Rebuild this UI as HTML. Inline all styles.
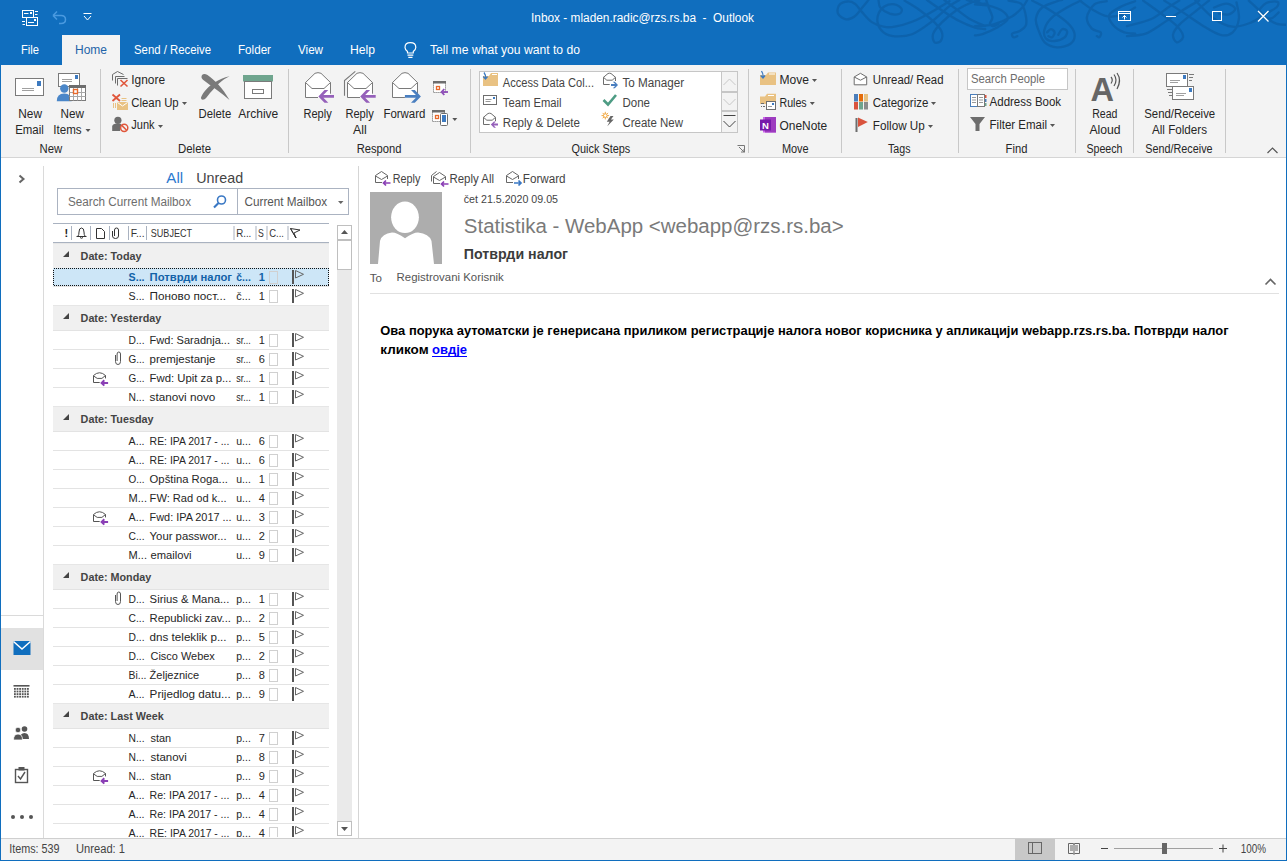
<!DOCTYPE html><html><head><meta charset="utf-8"><style>html,body{margin:0;padding:0;overflow:hidden;background:#fff}svg{display:block}text{font-family:"Liberation Sans",sans-serif}</style></head><body><svg width="1287" height="861" viewBox="0 0 1287 861"><rect x="0" y="0" width="1287" height="65" fill="#106EBE" />
<path d="M868.5 0.0 C867.5 1.2 864.6 4.8 862.3 7.5 C860.0 10.2 857.5 14.2 854.9 16.2 C852.2 18.1 848.9 19.7 846.1 19.3 C843.3 18.9 839.2 16.1 838.1 13.7 C836.9 11.3 837.7 7.0 839.3 5.0 C840.9 2.9 844.8 1.7 847.4 1.5 C850.0 1.3 852.4 1.9 854.9 3.7 C857.3 5.6 859.4 9.3 862.3 12.4 C865.2 15.5 868.7 20.0 872.3 22.4 C875.8 24.8 879.7 26.0 883.5 26.7 C887.2 27.5 889.9 27.6 894.7 26.7 C899.4 25.9 906.1 24.2 912.1 21.8 C918.1 19.4 924.5 15.9 930.7 12.4 C936.9 9.0 946.3 3.1 949.4 1.2 M878.5 0.0 C878.8 1.2 878.5 5.2 880.3 7.5 C882.2 9.7 886.5 12.6 889.7 13.7 C892.9 14.7 897.7 14.5 899.6 13.7 C901.6 12.9 902.3 10.3 901.5 8.7 C900.7 7.2 897.5 4.8 894.7 4.4 C891.9 3.9 887.4 4.7 884.7 6.2 C882.0 7.8 879.6 10.8 878.5 13.7 C877.3 16.6 877.0 20.5 877.9 23.6 C878.7 26.7 880.7 30.2 883.5 32.3 C886.3 34.5 889.9 36.0 894.7 36.3 C899.4 36.6 906.1 36.5 912.1 34.2 C918.1 31.9 924.5 27.1 930.7 22.4 C936.9 17.7 944.6 10.0 949.4 6.2 C954.1 2.5 957.7 1.0 959.3 0.0 M904.6 0.6 C907.1 2.2 914.6 6.3 919.5 10.0 C924.5 13.6 930.7 18.7 934.5 22.4 C938.2 26.1 940.9 29.2 941.9 32.3 C943.0 35.4 941.9 39.4 940.7 41.0 C939.4 42.7 935.7 43.5 934.5 42.3 C933.2 41.0 932.0 36.9 933.2 33.6 C934.5 30.3 938.0 26.3 941.9 22.4 C945.9 18.4 951.5 13.5 956.8 10.0 C962.2 6.4 970.5 2.8 974.3 1.2 C978.0 -0.3 978.4 0.7 979.2 0.6 M927.0 0.0 C929.7 1.9 937.8 7.7 943.2 11.2 C948.5 14.7 954.1 18.4 959.3 21.1 C964.5 23.8 970.0 26.0 974.3 27.4 C978.5 28.7 983.3 28.9 985.1 29.2 M944.4 0.0 C946.3 1.5 951.5 5.6 955.6 8.7 C959.7 11.8 964.4 15.8 969.3 18.7 C974.2 21.6 982.4 24.9 985.1 26.1 M966.8 0.0 C968.0 0.3 971.8 1.2 974.3 1.9 C976.7 2.5 979.9 3.4 981.7 3.7 C983.5 4.0 984.5 3.7 985.1 3.7 M975.0 4.4 C977.3 4.6 983.9 4.4 988.7 5.6 C993.4 6.8 1000.5 9.4 1003.6 11.8 C1006.7 14.2 1008.6 17.2 1007.3 19.9 C1006.1 22.6 1000.3 25.6 996.1 28.0 C992.0 30.4 986.0 33.0 982.5 34.2 C978.9 35.4 976.2 35.2 975.0 35.4 M986.2 0.0 C986.6 1.2 987.6 4.6 988.7 7.5 C989.7 10.4 992.2 14.7 992.4 17.4 C992.6 20.1 989.7 22.2 989.9 23.6 C990.1 25.1 992.2 26.1 993.7 26.1 C995.1 26.1 997.8 24.0 998.6 23.6 M975.0 26.1 C978.1 25.8 987.4 25.9 993.7 24.3 C999.9 22.6 1007.5 19.0 1012.3 16.2 C1017.1 13.4 1019.8 10.2 1022.3 7.5 C1024.8 4.8 1026.4 1.2 1027.2 0.0 M1008.6 0.6 C1010.7 1.1 1018.2 1.6 1021.0 3.7 C1023.8 5.9 1024.5 10.2 1025.4 13.7 C1026.2 17.2 1026.9 22.0 1026.0 24.9 C1025.1 27.8 1022.1 29.6 1019.8 31.1 C1017.5 32.5 1013.3 32.5 1012.3 33.6 C1011.3 34.6 1012.7 36.9 1013.6 37.3 C1014.4 37.7 1016.7 36.3 1017.3 36.1 M1032.2 0.6 C1035.1 2.2 1043.8 6.3 1049.6 10.0 C1055.4 13.6 1062.9 18.4 1067.0 22.4 C1071.2 26.3 1073.9 30.1 1074.5 33.6 C1075.1 37.1 1073.7 41.3 1070.8 43.5 C1067.9 45.8 1061.4 47.5 1057.1 47.3 C1052.7 47.1 1047.8 45.2 1044.7 42.3 C1041.5 39.4 1039.9 33.8 1038.4 29.9 C1037.0 25.9 1035.3 22.4 1035.9 18.7 C1036.6 14.9 1038.6 10.4 1042.2 7.5 C1045.7 4.6 1053.8 2.5 1057.1 1.2 C1060.4 0.0 1061.2 0.2 1062.1 0.0 M1080.7 0.6 C1078.4 1.8 1071.8 4.7 1067.0 7.5 C1062.3 10.3 1055.8 13.9 1052.1 17.4 C1048.4 20.9 1045.7 25.1 1044.7 28.6 C1043.6 32.1 1044.2 36.5 1045.9 38.6 C1047.6 40.6 1051.5 41.3 1054.6 41.0 C1057.7 40.8 1062.5 39.0 1064.6 37.3 C1066.6 35.7 1067.5 32.4 1067.0 31.1 C1066.6 29.7 1063.5 28.6 1062.1 29.2 C1060.6 29.9 1059.0 33.9 1058.3 34.8 M1047.1 32.3 C1047.8 31.8 1049.6 29.2 1050.9 29.2 C1052.1 29.2 1054.4 31.0 1054.6 32.3 C1054.8 33.7 1053.2 36.7 1052.1 37.3 C1051.1 37.9 1049.0 36.3 1048.4 36.1 M1106.8 1.2 C1104.8 1.8 1097.7 1.7 1094.4 4.4 C1091.1 7.0 1087.4 13.4 1086.9 17.4 C1086.5 21.5 1089.6 26.1 1091.9 28.6 C1094.2 31.1 1099.4 30.9 1100.6 32.3 C1101.9 33.8 1100.0 36.7 1099.4 37.3 C1098.8 37.9 1097.3 36.3 1096.9 36.1 M1080.7 1.2 C1082.8 2.7 1088.8 7.5 1093.2 10.0 C1097.5 12.4 1102.1 15.3 1106.8 16.2 C1111.6 17.0 1117.1 16.4 1121.8 14.9 C1126.5 13.5 1132.9 8.7 1135.1 7.5 M1135.1 1.2 C1132.9 2.1 1126.1 3.9 1121.8 6.2 C1117.5 8.5 1110.8 11.8 1109.3 14.9 C1107.9 18.0 1110.6 22.0 1113.1 24.9 C1115.5 27.8 1120.6 30.9 1124.3 32.3 C1127.9 33.8 1133.3 33.4 1135.1 33.6 M1127.0 26.1 C1131.1 24.9 1145.0 21.8 1151.9 18.7 C1158.7 15.5 1163.5 10.5 1168.0 7.5 C1172.6 4.5 1177.4 1.8 1179.2 0.6 M1127.0 36.1 C1130.1 35.7 1139.4 35.9 1145.7 33.6 C1151.9 31.3 1158.1 26.3 1164.3 22.4 C1170.5 18.4 1177.2 13.6 1183.0 10.0 C1188.8 6.3 1196.4 2.2 1199.1 0.6 M1143.2 0.6 C1147.3 3.6 1162.0 14.0 1168.0 18.7 C1174.1 23.3 1176.8 25.5 1179.2 28.6 C1181.7 31.7 1183.4 35.0 1183.0 37.3 C1182.6 39.6 1178.4 42.7 1176.8 42.3 C1175.1 41.9 1172.6 37.7 1173.0 34.8 C1173.4 31.9 1175.7 28.6 1179.2 24.9 C1182.8 21.1 1189.2 16.5 1194.2 12.4 C1199.1 8.4 1206.6 2.6 1209.1 0.6 M1164.3 0.6 C1167.4 2.6 1176.8 8.4 1183.0 12.4 C1189.2 16.5 1195.4 21.1 1201.6 24.9 C1207.8 28.6 1215.1 33.6 1220.3 34.8 C1225.5 36.1 1229.6 35.0 1232.7 32.3 C1235.8 29.6 1238.3 23.6 1238.9 18.7 C1239.6 13.7 1236.9 5.2 1236.5 2.5 M1214.1 7.5 C1216.1 6.8 1223.0 3.5 1226.5 3.7 C1230.0 3.9 1234.8 6.9 1235.2 8.7 C1235.6 10.5 1231.7 13.5 1229.0 14.3 C1226.3 15.1 1220.7 13.8 1219.0 13.7 M1195.4 0.6 C1198.5 3.6 1207.8 14.3 1214.1 18.7 C1220.3 23.0 1226.5 26.1 1232.7 26.7 C1238.9 27.4 1246.2 24.4 1251.4 22.4 C1256.6 20.4 1259.7 17.4 1263.8 14.9 C1268.0 12.4 1274.0 9.6 1276.3 7.5 C1278.5 5.3 1279.2 2.6 1277.5 1.9 C1275.8 1.1 1269.4 1.3 1266.3 3.1 C1263.2 4.9 1258.2 9.8 1258.8 12.4 C1259.5 15.0 1266.7 18.7 1270.0 18.7 C1273.4 18.7 1277.3 13.5 1278.7 12.4 M1248.9 0.6 C1250.5 2.2 1255.7 6.9 1258.8 10.0 C1262.0 13.0 1264.6 16.4 1267.5 18.7 C1270.4 20.9 1273.0 22.6 1276.3 23.6 C1279.5 24.7 1285.3 24.7 1287.1 24.9" fill="none" stroke="#0C5FA6" stroke-opacity="0.75" stroke-width="2.3" stroke-linecap="round"/>
<g stroke="#fff" fill="none" stroke-width="1"><rect x="22.5" y="10.5" width="11" height="7"/><rect x="26.5" y="17.5" width="11" height="8"/><path d="M24 13.5 H28.5 M28 22.5 H34 M35 11.5 H38 M35 14.5 H37.5 M22 21.5 H25 M22.5 24.5 H25"/></g>
<rect x="30" y="12" width="2" height="2" fill="#fff"/><rect x="34" y="19" width="2" height="2" fill="#fff"/>
<path d="M53 15.5 L57 11.5 M53 15.5 L57 19.5 M53 15.5 H61 Q65.5 15.5 65.5 19.5 Q65.5 23.5 61 23.5 H59" stroke="#4A9AE0" stroke-width="1.5" fill="none"/>
<path d="M83.5 13.5 H91.5 M84 16 L87.5 20 L91 16" stroke="#fff" stroke-width="1" fill="none"/>
<text x="531" y="22" font-size="12" fill="#fff" textLength="223.0" lengthAdjust="spacingAndGlyphs" >Inbox - mladen.radic@rzs.rs.ba  -  Outlook</text>
<g stroke="#fff" fill="none" stroke-width="1"><rect x="1118.5" y="11.5" width="12" height="9"/><line x1="1118.5" y1="13.5" x2="1130.5" y2="13.5"/><path d="M1124.5 19.5 V15.5 M1122.5 17.5 L1124.5 15.5 L1126.5 17.5"/><line x1="1166" y1="16.5" x2="1176" y2="16.5"/><rect x="1212.5" y="11.5" width="9" height="9"/><path d="M1258 11 L1268.5 21.5 M1268.5 11 L1258 21.5" stroke-width="1.3"/></g>
<rect x="62" y="35" width="58" height="30" fill="#F3F3F3" />
<text x="21" y="54" font-size="12" fill="#fff" textLength="18.0" lengthAdjust="spacingAndGlyphs" >File</text>
<text x="75" y="54" font-size="12" fill="#1E63A8" textLength="32.0" lengthAdjust="spacingAndGlyphs" >Home</text>
<text x="134" y="54" font-size="12" fill="#fff" textLength="77.0" lengthAdjust="spacingAndGlyphs" >Send / Receive</text>
<text x="238" y="54" font-size="12" fill="#fff" textLength="33.0" lengthAdjust="spacingAndGlyphs" >Folder</text>
<text x="298" y="54" font-size="12" fill="#fff" textLength="25.0" lengthAdjust="spacingAndGlyphs" >View</text>
<text x="350" y="54" font-size="12" fill="#fff" textLength="25.0" lengthAdjust="spacingAndGlyphs" >Help</text>
<path d="M407.5 53 V51.5 Q405 49.5 405 47.5 Q405 42.7 410.4 42.7 Q415.8 42.7 415.8 47.5 Q415.8 49.5 413.3 51.5 V53 Z M407.5 55.2 H413.3 M408.3 57.3 H412.5" stroke="#fff" stroke-width="1.2" fill="none"/>
<text x="430" y="54" font-size="12" fill="#fff" textLength="150.0" lengthAdjust="spacingAndGlyphs" >Tell me what you want to do</text>
<rect x="1" y="65" width="1285" height="92" fill="#F3F3F3" />
<rect x="0" y="157" width="1287" height="1" fill="#D5D5D5" />
<rect x="100" y="69" width="1" height="84" fill="#C8C8C8" />
<rect x="288" y="69" width="1" height="84" fill="#C8C8C8" />
<rect x="470" y="69" width="1" height="84" fill="#C8C8C8" />
<rect x="748" y="69" width="1" height="84" fill="#C8C8C8" />
<rect x="841" y="69" width="1" height="84" fill="#C8C8C8" />
<rect x="958" y="69" width="1" height="84" fill="#C8C8C8" />
<rect x="1075" y="69" width="1" height="84" fill="#C8C8C8" />
<rect x="1133" y="69" width="1" height="84" fill="#C8C8C8" />
<rect x="1225" y="69" width="1" height="84" fill="#C8C8C8" />
<text x="39.5" y="152.7" font-size="12" fill="#262626" textLength="22.7" lengthAdjust="spacingAndGlyphs" >New</text>
<text x="178" y="152.7" font-size="12" fill="#262626" textLength="33.0" lengthAdjust="spacingAndGlyphs" >Delete</text>
<text x="356.7" y="152.7" font-size="12" fill="#262626" textLength="44.8" lengthAdjust="spacingAndGlyphs" >Respond</text>
<text x="571.6" y="152.7" font-size="12" fill="#262626" textLength="58.7" lengthAdjust="spacingAndGlyphs" >Quick Steps</text>
<text x="781.9" y="152.7" font-size="12" fill="#262626" textLength="26.8" lengthAdjust="spacingAndGlyphs" >Move</text>
<text x="888" y="152.7" font-size="12" fill="#262626" textLength="22.5" lengthAdjust="spacingAndGlyphs" >Tags</text>
<text x="1005.6" y="152.7" font-size="12" fill="#262626" textLength="21.8" lengthAdjust="spacingAndGlyphs" >Find</text>
<text x="1086.4" y="152.7" font-size="12" fill="#262626" textLength="36.1" lengthAdjust="spacingAndGlyphs" >Speech</text>
<text x="1145.3" y="152.7" font-size="12" fill="#262626" textLength="67.3" lengthAdjust="spacingAndGlyphs" >Send/Receive</text>
<text x="18.3" y="117.6" font-size="12" fill="#262626" textLength="23.7" lengthAdjust="spacingAndGlyphs" >New</text>
<text x="15.2" y="134" font-size="12" fill="#262626" textLength="28.6" lengthAdjust="spacingAndGlyphs" >Email</text>
<text x="60.6" y="117.6" font-size="12" fill="#262626" textLength="23.4" lengthAdjust="spacingAndGlyphs" >New</text>
<text x="53.3" y="134" font-size="12" fill="#262626" textLength="28.3" lengthAdjust="spacingAndGlyphs" >Items</text>
<text x="198.5" y="117.6" font-size="12" fill="#262626" textLength="32.7" lengthAdjust="spacingAndGlyphs" >Delete</text>
<text x="238.2" y="117.6" font-size="12" fill="#262626" textLength="40.1" lengthAdjust="spacingAndGlyphs" >Archive</text>
<text x="303.4" y="117.6" font-size="12" fill="#262626" textLength="28.3" lengthAdjust="spacingAndGlyphs" >Reply</text>
<text x="345.4" y="117.6" font-size="12" fill="#262626" textLength="28.4" lengthAdjust="spacingAndGlyphs" >Reply</text>
<text x="353" y="133.6" font-size="12" fill="#262626" textLength="13.7" lengthAdjust="spacingAndGlyphs" >All</text>
<text x="383.4" y="117.6" font-size="12" fill="#262626" textLength="42.0" lengthAdjust="spacingAndGlyphs" >Forward</text>
<text x="1092.2" y="117.6" font-size="12" fill="#262626" textLength="25.3" lengthAdjust="spacingAndGlyphs" >Read</text>
<text x="1089.4" y="133.6" font-size="12" fill="#262626" textLength="31.2" lengthAdjust="spacingAndGlyphs" >Aloud</text>
<text x="1144.2" y="117.6" font-size="12" fill="#262626" textLength="71.0" lengthAdjust="spacingAndGlyphs" >Send/Receive</text>
<text x="1152" y="133.6" font-size="12" fill="#262626" textLength="55.0" lengthAdjust="spacingAndGlyphs" >All Folders</text>
<text x="131.3" y="84" font-size="12" fill="#262626" textLength="33.7" lengthAdjust="spacingAndGlyphs" >Ignore</text>
<text x="131.3" y="106.7" font-size="12" fill="#262626" textLength="47.4" lengthAdjust="spacingAndGlyphs" >Clean Up</text>
<text x="131.3" y="129.3" font-size="12" fill="#262626" textLength="23.3" lengthAdjust="spacingAndGlyphs" >Junk</text>
<text x="779.5" y="84" font-size="12" fill="#262626" textLength="29.5" lengthAdjust="spacingAndGlyphs" >Move</text>
<text x="779.5" y="106.7" font-size="12" fill="#262626" textLength="27.2" lengthAdjust="spacingAndGlyphs" >Rules</text>
<text x="779.5" y="129.5" font-size="12" fill="#262626" textLength="47.7" lengthAdjust="spacingAndGlyphs" >OneNote</text>
<text x="872.8" y="84" font-size="12" fill="#262626" textLength="70.7" lengthAdjust="spacingAndGlyphs" >Unread/ Read</text>
<text x="872.8" y="106.7" font-size="12" fill="#262626" textLength="55.6" lengthAdjust="spacingAndGlyphs" >Categorize</text>
<text x="872.8" y="129.5" font-size="12" fill="#262626" textLength="52.0" lengthAdjust="spacingAndGlyphs" >Follow Up</text>
<text x="989.6" y="106" font-size="12" fill="#262626" textLength="71.5" lengthAdjust="spacingAndGlyphs" >Address Book</text>
<text x="989.6" y="128.5" font-size="12" fill="#262626" textLength="57.5" lengthAdjust="spacingAndGlyphs" >Filter Email</text>
<path d="M85.5 129 h5 l-2.5 3 z" fill="#555"/>
<path d="M182 102 h5 l-2.5 3 z" fill="#555"/>
<path d="M158 125 h5 l-2.5 3 z" fill="#555"/>
<path d="M452.3 118 h5 l-2.5 3 z" fill="#555"/>
<path d="M812 79 h5 l-2.5 3 z" fill="#555"/>
<path d="M809.8 102 h5 l-2.5 3 z" fill="#555"/>
<path d="M931 102 h5 l-2.5 3 z" fill="#555"/>
<path d="M928 125 h5 l-2.5 3 z" fill="#555"/>
<path d="M1050 124 h5 l-2.5 3 z" fill="#555"/>
<rect x="967.5" y="68.5" width="100" height="21" fill="#fff" stroke="#C6C6C6" stroke-width="1"/>
<text x="971" y="83" font-size="12" fill="#6D6D6D" textLength="74.1" lengthAdjust="spacingAndGlyphs" >Search People</text>
<rect x="479.5" y="71.5" width="258" height="61" fill="#fff" stroke="#C6C6C6" stroke-width="1"/>
<text x="502.8" y="87" font-size="12" fill="#444" textLength="91.2" lengthAdjust="spacingAndGlyphs" >Access Data Col...</text>
<text x="502.8" y="107" font-size="12" fill="#444" textLength="58.7" lengthAdjust="spacingAndGlyphs" >Team Email</text>
<text x="502.8" y="127" font-size="12" fill="#444" textLength="77.2" lengthAdjust="spacingAndGlyphs" >Reply &amp; Delete</text>
<text x="622.5" y="87" font-size="12" fill="#444" textLength="61.7" lengthAdjust="spacingAndGlyphs" >To Manager</text>
<text x="622.5" y="107" font-size="12" fill="#444" textLength="27.5" lengthAdjust="spacingAndGlyphs" >Done</text>
<text x="622.5" y="127" font-size="12" fill="#444" textLength="60.5" lengthAdjust="spacingAndGlyphs" >Create New</text>
<rect x="721" y="71.5" width="16.5" height="61" fill="#F3F3F3" />
<g stroke="#C6C6C6" fill="none" stroke-width="1"><rect x="721.5" y="71.5" width="16" height="20"/><rect x="721.5" y="92.5" width="16" height="18"/><rect x="721.5" y="111.5" width="16" height="21"/></g>
<path d="M723.5 85 L729.5 79 L735.5 85 M723.5 99 L729.5 105 L735.5 99" stroke="#C8C8C8" fill="none" stroke-width="1"/>
<path d="M723.5 115.5 H735.5 M723.5 121 L729.5 127 L735.5 121" stroke="#444" fill="none" stroke-width="1"/>
<path d="M737.5 145.5 H744.5 V152.5 M739 147 L744 152 M744 149 V152 H741" stroke="#777" fill="none" stroke-width="1"/>
<path d="M1267.5 153 L1272.5 148 L1277.5 153" stroke="#555" fill="none" stroke-width="1.2"/>
<rect x="43" y="166" width="1" height="672" fill="#DADADA" />
<path d="M19.5 175.5 L23.5 179 L19.5 182.5" stroke="#666" stroke-width="2" fill="none"/>
<rect x="1" y="615" width="42" height="1" fill="#DADADA" />
<rect x="1" y="628" width="42" height="42" fill="#E1E1E1" />
<text x="166.3" y="183" font-size="15" fill="#2B79CF" textLength="16.8" lengthAdjust="spacingAndGlyphs" >All</text>
<text x="196.3" y="183" font-size="15" fill="#444" textLength="46.9" lengthAdjust="spacingAndGlyphs" >Unread</text>
<rect x="57.5" y="188.5" width="291" height="26" fill="#fff" stroke="#ABB3C1" stroke-width="1"/>
<rect x="237" y="189" width="1" height="25" fill="#ABB3C1" />
<text x="68" y="206" font-size="12" fill="#6D6D6D" textLength="123.0" lengthAdjust="spacingAndGlyphs" >Search Current Mailbox</text>
<g stroke="#3A78C4" fill="none"><circle cx="221.5" cy="200" r="4" stroke-width="1.6"/><path d="M218.5 203 L214 207.5" stroke-width="2.2"/></g>
<text x="244.5" y="205.8" font-size="12" fill="#555" textLength="82.7" lengthAdjust="spacingAndGlyphs" >Current Mailbox</text>
<path d="M338 201 h5.5 l-2.75 3 z" fill="#666"/>
<rect x="53" y="223" width="276" height="1" fill="#A9B2C0" />
<rect x="53" y="242" width="276" height="1" fill="#A9B2C0" />
<rect x="71" y="226" width="1" height="14" fill="#A9B2C0" />
<rect x="90" y="226" width="1" height="14" fill="#A9B2C0" />
<rect x="109" y="226" width="1" height="14" fill="#A9B2C0" />
<rect x="128" y="226" width="1" height="14" fill="#A9B2C0" />
<rect x="146" y="226" width="1" height="14" fill="#A9B2C0" />
<rect x="233.5" y="226" width="1" height="14" fill="#A9B2C0" />
<rect x="255.5" y="226" width="1" height="14" fill="#A9B2C0" />
<rect x="266.5" y="226" width="1" height="14" fill="#A9B2C0" />
<rect x="287.5" y="226" width="1" height="14" fill="#A9B2C0" />
<text x="64.5" y="237" font-size="11" fill="#222" font-weight="bold" >!</text>
<path d="M76.5 236.5 h10 M78 236 q1-1 1-4 q0-4 2.5-4 q2.5 0 2.5 4 q0 3 1 4 M80 237.5 q1.5 1.5 3 0" stroke="#333" fill="none" stroke-width="1"/>
<path d="M96.5 228.5 h5 l3 3 v7 h-8 z" stroke="#333" fill="none" stroke-width="1"/>
<path d="M112.5 231 v5 q0 2.5 3 2.5 q3 0 3-2.5 v-6 q0-2-2-2 q-2 0-2 2 v6" stroke="#333" fill="none" stroke-width="1"/>
<text x="130.8" y="237" font-size="11" fill="#333" textLength="13.8" lengthAdjust="spacingAndGlyphs" >F...</text>
<text x="150.8" y="237" font-size="11" fill="#333" textLength="41.2" lengthAdjust="spacingAndGlyphs" >SUBJECT</text>
<text x="236.2" y="237" font-size="11" fill="#333" textLength="15.1" lengthAdjust="spacingAndGlyphs" >R...</text>
<text x="258" y="237" font-size="11" fill="#333" textLength="5.8" lengthAdjust="spacingAndGlyphs" >S</text>
<text x="269.3" y="237" font-size="11" fill="#333" textLength="14.7" lengthAdjust="spacingAndGlyphs" >C...</text>
<path d="M290.5 228.5 L300 230 L294 233 L296 238 Z M290.5 228.5 L296 238" stroke="#333" fill="none" stroke-width="1"/>
<rect x="337" y="225" width="15" height="611" fill="#EAEAEA" />
<rect x="337.5" y="225.5" width="14" height="14" fill="#fff" stroke="#BFBFBF"/>
<path d="M341 234 h7 l-3.5-4 z" fill="#555"/>
<rect x="337.5" y="240.5" width="14" height="29" fill="#fff" stroke="#BFBFBF"/>
<rect x="337.5" y="821.5" width="14" height="14" fill="#fff" stroke="#BFBFBF"/>
<path d="M341 827 h7 l-3.5 4 z" fill="#555"/>
<rect x="358" y="166" width="1" height="672" fill="#D5D5D5" />
<rect x="53" y="243" width="276" height="25" fill="#F0F0F0" />
<rect x="53" y="243" width="276" height="1" fill="#E6E6E6" />
<path d="M63 257 L69 251 V257 Z" fill="#444"/>
<text x="80.6" y="260" font-size="11" fill="#444" font-weight="bold" textLength="60.9" lengthAdjust="spacingAndGlyphs" >Date: Today</text>
<rect x="53" y="268" width="276" height="18" fill="#CDE6F7" />
<path d="M54 268h1v1h-1zM54 285h1v1h-1zM56 268h1v1h-1zM56 285h1v1h-1zM58 268h1v1h-1zM58 285h1v1h-1zM60 268h1v1h-1zM60 285h1v1h-1zM62 268h1v1h-1zM62 285h1v1h-1zM64 268h1v1h-1zM64 285h1v1h-1zM66 268h1v1h-1zM66 285h1v1h-1zM68 268h1v1h-1zM68 285h1v1h-1zM70 268h1v1h-1zM70 285h1v1h-1zM72 268h1v1h-1zM72 285h1v1h-1zM74 268h1v1h-1zM74 285h1v1h-1zM76 268h1v1h-1zM76 285h1v1h-1zM78 268h1v1h-1zM78 285h1v1h-1zM80 268h1v1h-1zM80 285h1v1h-1zM82 268h1v1h-1zM82 285h1v1h-1zM84 268h1v1h-1zM84 285h1v1h-1zM86 268h1v1h-1zM86 285h1v1h-1zM88 268h1v1h-1zM88 285h1v1h-1zM90 268h1v1h-1zM90 285h1v1h-1zM92 268h1v1h-1zM92 285h1v1h-1zM94 268h1v1h-1zM94 285h1v1h-1zM96 268h1v1h-1zM96 285h1v1h-1zM98 268h1v1h-1zM98 285h1v1h-1zM100 268h1v1h-1zM100 285h1v1h-1zM102 268h1v1h-1zM102 285h1v1h-1zM104 268h1v1h-1zM104 285h1v1h-1zM106 268h1v1h-1zM106 285h1v1h-1zM108 268h1v1h-1zM108 285h1v1h-1zM110 268h1v1h-1zM110 285h1v1h-1zM112 268h1v1h-1zM112 285h1v1h-1zM114 268h1v1h-1zM114 285h1v1h-1zM116 268h1v1h-1zM116 285h1v1h-1zM118 268h1v1h-1zM118 285h1v1h-1zM120 268h1v1h-1zM120 285h1v1h-1zM122 268h1v1h-1zM122 285h1v1h-1zM124 268h1v1h-1zM124 285h1v1h-1zM126 268h1v1h-1zM126 285h1v1h-1zM128 268h1v1h-1zM128 285h1v1h-1zM130 268h1v1h-1zM130 285h1v1h-1zM132 268h1v1h-1zM132 285h1v1h-1zM134 268h1v1h-1zM134 285h1v1h-1zM136 268h1v1h-1zM136 285h1v1h-1zM138 268h1v1h-1zM138 285h1v1h-1zM140 268h1v1h-1zM140 285h1v1h-1zM142 268h1v1h-1zM142 285h1v1h-1zM144 268h1v1h-1zM144 285h1v1h-1zM146 268h1v1h-1zM146 285h1v1h-1zM148 268h1v1h-1zM148 285h1v1h-1zM150 268h1v1h-1zM150 285h1v1h-1zM152 268h1v1h-1zM152 285h1v1h-1zM154 268h1v1h-1zM154 285h1v1h-1zM156 268h1v1h-1zM156 285h1v1h-1zM158 268h1v1h-1zM158 285h1v1h-1zM160 268h1v1h-1zM160 285h1v1h-1zM162 268h1v1h-1zM162 285h1v1h-1zM164 268h1v1h-1zM164 285h1v1h-1zM166 268h1v1h-1zM166 285h1v1h-1zM168 268h1v1h-1zM168 285h1v1h-1zM170 268h1v1h-1zM170 285h1v1h-1zM172 268h1v1h-1zM172 285h1v1h-1zM174 268h1v1h-1zM174 285h1v1h-1zM176 268h1v1h-1zM176 285h1v1h-1zM178 268h1v1h-1zM178 285h1v1h-1zM180 268h1v1h-1zM180 285h1v1h-1zM182 268h1v1h-1zM182 285h1v1h-1zM184 268h1v1h-1zM184 285h1v1h-1zM186 268h1v1h-1zM186 285h1v1h-1zM188 268h1v1h-1zM188 285h1v1h-1zM190 268h1v1h-1zM190 285h1v1h-1zM192 268h1v1h-1zM192 285h1v1h-1zM194 268h1v1h-1zM194 285h1v1h-1zM196 268h1v1h-1zM196 285h1v1h-1zM198 268h1v1h-1zM198 285h1v1h-1zM200 268h1v1h-1zM200 285h1v1h-1zM202 268h1v1h-1zM202 285h1v1h-1zM204 268h1v1h-1zM204 285h1v1h-1zM206 268h1v1h-1zM206 285h1v1h-1zM208 268h1v1h-1zM208 285h1v1h-1zM210 268h1v1h-1zM210 285h1v1h-1zM212 268h1v1h-1zM212 285h1v1h-1zM214 268h1v1h-1zM214 285h1v1h-1zM216 268h1v1h-1zM216 285h1v1h-1zM218 268h1v1h-1zM218 285h1v1h-1zM220 268h1v1h-1zM220 285h1v1h-1zM222 268h1v1h-1zM222 285h1v1h-1zM224 268h1v1h-1zM224 285h1v1h-1zM226 268h1v1h-1zM226 285h1v1h-1zM228 268h1v1h-1zM228 285h1v1h-1zM230 268h1v1h-1zM230 285h1v1h-1zM232 268h1v1h-1zM232 285h1v1h-1zM234 268h1v1h-1zM234 285h1v1h-1zM236 268h1v1h-1zM236 285h1v1h-1zM238 268h1v1h-1zM238 285h1v1h-1zM240 268h1v1h-1zM240 285h1v1h-1zM242 268h1v1h-1zM242 285h1v1h-1zM244 268h1v1h-1zM244 285h1v1h-1zM246 268h1v1h-1zM246 285h1v1h-1zM248 268h1v1h-1zM248 285h1v1h-1zM250 268h1v1h-1zM250 285h1v1h-1zM252 268h1v1h-1zM252 285h1v1h-1zM254 268h1v1h-1zM254 285h1v1h-1zM256 268h1v1h-1zM256 285h1v1h-1zM258 268h1v1h-1zM258 285h1v1h-1zM260 268h1v1h-1zM260 285h1v1h-1zM262 268h1v1h-1zM262 285h1v1h-1zM264 268h1v1h-1zM264 285h1v1h-1zM266 268h1v1h-1zM266 285h1v1h-1zM268 268h1v1h-1zM268 285h1v1h-1zM270 268h1v1h-1zM270 285h1v1h-1zM272 268h1v1h-1zM272 285h1v1h-1zM274 268h1v1h-1zM274 285h1v1h-1zM276 268h1v1h-1zM276 285h1v1h-1zM278 268h1v1h-1zM278 285h1v1h-1zM280 268h1v1h-1zM280 285h1v1h-1zM282 268h1v1h-1zM282 285h1v1h-1zM284 268h1v1h-1zM284 285h1v1h-1zM286 268h1v1h-1zM286 285h1v1h-1zM288 268h1v1h-1zM288 285h1v1h-1zM290 268h1v1h-1zM290 285h1v1h-1zM292 268h1v1h-1zM292 285h1v1h-1zM294 268h1v1h-1zM294 285h1v1h-1zM296 268h1v1h-1zM296 285h1v1h-1zM298 268h1v1h-1zM298 285h1v1h-1zM300 268h1v1h-1zM300 285h1v1h-1zM302 268h1v1h-1zM302 285h1v1h-1zM304 268h1v1h-1zM304 285h1v1h-1zM306 268h1v1h-1zM306 285h1v1h-1zM308 268h1v1h-1zM308 285h1v1h-1zM310 268h1v1h-1zM310 285h1v1h-1zM312 268h1v1h-1zM312 285h1v1h-1zM314 268h1v1h-1zM314 285h1v1h-1zM316 268h1v1h-1zM316 285h1v1h-1zM318 268h1v1h-1zM318 285h1v1h-1zM320 268h1v1h-1zM320 285h1v1h-1zM322 268h1v1h-1zM322 285h1v1h-1zM324 268h1v1h-1zM324 285h1v1h-1zM326 268h1v1h-1zM326 285h1v1h-1zM328 268h1v1h-1zM328 285h1v1h-1zM53 270h1v1h-1zM328 270h1v1h-1zM53 272h1v1h-1zM328 272h1v1h-1zM53 274h1v1h-1zM328 274h1v1h-1zM53 276h1v1h-1zM328 276h1v1h-1zM53 278h1v1h-1zM328 278h1v1h-1zM53 280h1v1h-1zM328 280h1v1h-1zM53 282h1v1h-1zM328 282h1v1h-1zM53 284h1v1h-1zM328 284h1v1h-1z" fill="#111"/>
<text x="128.6" y="281" font-size="11" fill="#1262A8" font-weight="bold" textLength="16.0" lengthAdjust="spacingAndGlyphs" >S...</text>
<text x="149.6" y="281" font-size="11" fill="#1262A8" font-weight="bold" textLength="82.4" lengthAdjust="spacingAndGlyphs" >Потврди налог</text>
<text x="236.3" y="281" font-size="11" fill="#1262A8" font-weight="bold" textLength="14.5" lengthAdjust="spacingAndGlyphs" >č...</text>
<text x="258.8" y="281" font-size="11" fill="#1262A8" font-weight="bold" >1</text>
<rect x="269.5" y="271.5" width="8" height="12" fill="none" stroke="#D0D0D0" stroke-width="1"/>
<rect x="292" y="270" width="2" height="14" fill="#555"/><path d="M295.5 270.5 L303.5 274.3 L295.5 278 Z" fill="none" stroke="#666" stroke-width="1"/>
<rect x="53" y="286" width="276" height="1" fill="#E3E3E3" />
<text x="128.6" y="300" font-size="11" fill="#262626" textLength="16.0" lengthAdjust="spacingAndGlyphs" >S...</text>
<text x="149.6" y="300" font-size="11" fill="#262626" textLength="76.4" lengthAdjust="spacingAndGlyphs" >Поново пост...</text>
<text x="236.3" y="300" font-size="11" fill="#262626" textLength="14.5" lengthAdjust="spacingAndGlyphs" >č...</text>
<text x="258.8" y="300" font-size="11" fill="#262626" >1</text>
<rect x="269.5" y="290.5" width="8" height="12" fill="#fff" stroke="#D0D0D0" stroke-width="1"/>
<rect x="292" y="289" width="2" height="14" fill="#555"/><path d="M295.5 289.5 L303.5 293.3 L295.5 297 Z" fill="none" stroke="#666" stroke-width="1"/>
<rect x="53" y="305" width="276" height="25" fill="#F0F0F0" />
<rect x="53" y="305" width="276" height="1" fill="#E6E6E6" />
<path d="M63 319 L69 313 V319 Z" fill="#444"/>
<text x="80.6" y="322" font-size="11" fill="#444" font-weight="bold" textLength="80.7" lengthAdjust="spacingAndGlyphs" >Date: Yesterday</text>
<rect x="53" y="330" width="276" height="1" fill="#E3E3E3" />
<text x="128.6" y="344" font-size="11" fill="#262626" textLength="16.0" lengthAdjust="spacingAndGlyphs" >D...</text>
<text x="149.6" y="344" font-size="11" fill="#262626" textLength="80.4" lengthAdjust="spacingAndGlyphs" >Fwd: Saradnja...</text>
<text x="236.3" y="344" font-size="11" fill="#262626" textLength="14.5" lengthAdjust="spacingAndGlyphs" >sr...</text>
<text x="258.8" y="344" font-size="11" fill="#262626" >1</text>
<rect x="269.5" y="334.5" width="8" height="12" fill="#fff" stroke="#D0D0D0" stroke-width="1"/>
<rect x="292" y="333" width="2" height="14" fill="#555"/><path d="M295.5 333.5 L303.5 337.3 L295.5 341 Z" fill="none" stroke="#666" stroke-width="1"/>
<rect x="53" y="349" width="276" height="1" fill="#E3E3E3" />
<text x="128.6" y="363" font-size="11" fill="#262626" textLength="16.0" lengthAdjust="spacingAndGlyphs" >G...</text>
<text x="149.6" y="363" font-size="11" fill="#262626" textLength="65.8" lengthAdjust="spacingAndGlyphs" >premjestanje</text>
<text x="236.3" y="363" font-size="11" fill="#262626" textLength="14.5" lengthAdjust="spacingAndGlyphs" >sr...</text>
<text x="258.8" y="363" font-size="11" fill="#262626" >6</text>
<rect x="269.5" y="353.5" width="8" height="12" fill="#fff" stroke="#D0D0D0" stroke-width="1"/>
<rect x="292" y="352" width="2" height="14" fill="#555"/><path d="M295.5 352.5 L303.5 356.3 L295.5 360 Z" fill="none" stroke="#666" stroke-width="1"/>
<path d="M115.5 355 v6.5 q0 3 2.5 3 q2.5 0 2.5-3 v-7.5 q0-2-1.7-2 q-1.7 0-1.7 2 v7" stroke="#555" fill="none" stroke-width="1"/>
<rect x="53" y="368" width="276" height="1" fill="#E3E3E3" />
<text x="128.6" y="382" font-size="11" fill="#262626" textLength="16.0" lengthAdjust="spacingAndGlyphs" >G...</text>
<text x="149.6" y="382" font-size="11" fill="#262626" textLength="81.8" lengthAdjust="spacingAndGlyphs" >Fwd: Upit za p...</text>
<text x="236.3" y="382" font-size="11" fill="#262626" textLength="14.5" lengthAdjust="spacingAndGlyphs" >sr...</text>
<text x="258.8" y="382" font-size="11" fill="#262626" >1</text>
<rect x="269.5" y="372.5" width="8" height="12" fill="#fff" stroke="#D0D0D0" stroke-width="1"/>
<rect x="292" y="371" width="2" height="14" fill="#555"/><path d="M295.5 371.5 L303.5 375.3 L295.5 379 Z" fill="none" stroke="#666" stroke-width="1"/>
<path d="M99.7 382.5 H93.5 V375.5 Q99.5 370 105.5 375.5 V378.4 M93.7 376 L97.2 378.4 H101.9 L105.5 375.5" stroke="#555" fill="none" stroke-width="1"/><path d="M108.1 382.9 h-5.5 M104.3 380.2 l-2.7 2.7 l2.7 2.7" stroke="#8A3FB5" fill="none" stroke-width="2"/>
<rect x="53" y="387" width="276" height="1" fill="#E3E3E3" />
<text x="128.6" y="401" font-size="11" fill="#262626" textLength="16.0" lengthAdjust="spacingAndGlyphs" >N...</text>
<text x="149.6" y="401" font-size="11" fill="#262626" textLength="65.8" lengthAdjust="spacingAndGlyphs" >stanovi novo</text>
<text x="236.3" y="401" font-size="11" fill="#262626" textLength="14.5" lengthAdjust="spacingAndGlyphs" >sr...</text>
<text x="258.8" y="401" font-size="11" fill="#262626" >1</text>
<rect x="269.5" y="391.5" width="8" height="12" fill="#fff" stroke="#D0D0D0" stroke-width="1"/>
<rect x="292" y="390" width="2" height="14" fill="#555"/><path d="M295.5 390.5 L303.5 394.3 L295.5 398 Z" fill="none" stroke="#666" stroke-width="1"/>
<rect x="53" y="406" width="276" height="25" fill="#F0F0F0" />
<rect x="53" y="406" width="276" height="1" fill="#E6E6E6" />
<path d="M63 420 L69 414 V420 Z" fill="#444"/>
<text x="80.6" y="423" font-size="11" fill="#444" font-weight="bold" textLength="72.9" lengthAdjust="spacingAndGlyphs" >Date: Tuesday</text>
<rect x="53" y="431" width="276" height="1" fill="#E3E3E3" />
<text x="128.6" y="445" font-size="11" fill="#262626" textLength="16.0" lengthAdjust="spacingAndGlyphs" >A...</text>
<text x="149.6" y="445" font-size="11" fill="#262626" textLength="79.8" lengthAdjust="spacingAndGlyphs" >RE: IPA 2017 - ...</text>
<text x="236.3" y="445" font-size="11" fill="#262626" textLength="14.5" lengthAdjust="spacingAndGlyphs" >u...</text>
<text x="258.8" y="445" font-size="11" fill="#262626" >6</text>
<rect x="269.5" y="435.5" width="8" height="12" fill="#fff" stroke="#D0D0D0" stroke-width="1"/>
<rect x="292" y="434" width="2" height="14" fill="#555"/><path d="M295.5 434.5 L303.5 438.3 L295.5 442 Z" fill="none" stroke="#666" stroke-width="1"/>
<rect x="53" y="450" width="276" height="1" fill="#E3E3E3" />
<text x="128.6" y="464" font-size="11" fill="#262626" textLength="16.0" lengthAdjust="spacingAndGlyphs" >A...</text>
<text x="149.6" y="464" font-size="11" fill="#262626" textLength="79.8" lengthAdjust="spacingAndGlyphs" >RE: IPA 2017 - ...</text>
<text x="236.3" y="464" font-size="11" fill="#262626" textLength="14.5" lengthAdjust="spacingAndGlyphs" >u...</text>
<text x="258.8" y="464" font-size="11" fill="#262626" >6</text>
<rect x="269.5" y="454.5" width="8" height="12" fill="#fff" stroke="#D0D0D0" stroke-width="1"/>
<rect x="292" y="453" width="2" height="14" fill="#555"/><path d="M295.5 453.5 L303.5 457.3 L295.5 461 Z" fill="none" stroke="#666" stroke-width="1"/>
<rect x="53" y="469" width="276" height="1" fill="#E3E3E3" />
<text x="128.6" y="483" font-size="11" fill="#262626" textLength="16.0" lengthAdjust="spacingAndGlyphs" >O...</text>
<text x="149.6" y="483" font-size="11" fill="#262626" textLength="78.4" lengthAdjust="spacingAndGlyphs" >Opština Roga...</text>
<text x="236.3" y="483" font-size="11" fill="#262626" textLength="14.5" lengthAdjust="spacingAndGlyphs" >u...</text>
<text x="258.8" y="483" font-size="11" fill="#262626" >1</text>
<rect x="269.5" y="473.5" width="8" height="12" fill="#fff" stroke="#D0D0D0" stroke-width="1"/>
<rect x="292" y="472" width="2" height="14" fill="#555"/><path d="M295.5 472.5 L303.5 476.3 L295.5 480 Z" fill="none" stroke="#666" stroke-width="1"/>
<rect x="53" y="488" width="276" height="1" fill="#E3E3E3" />
<text x="128.6" y="502" font-size="11" fill="#262626" textLength="18.4" lengthAdjust="spacingAndGlyphs" >M...</text>
<text x="149.6" y="502" font-size="11" fill="#262626" textLength="77.0" lengthAdjust="spacingAndGlyphs" >FW: Rad od k...</text>
<text x="236.3" y="502" font-size="11" fill="#262626" textLength="14.5" lengthAdjust="spacingAndGlyphs" >u...</text>
<text x="258.8" y="502" font-size="11" fill="#262626" >4</text>
<rect x="269.5" y="492.5" width="8" height="12" fill="#fff" stroke="#D0D0D0" stroke-width="1"/>
<rect x="292" y="491" width="2" height="14" fill="#555"/><path d="M295.5 491.5 L303.5 495.3 L295.5 499 Z" fill="none" stroke="#666" stroke-width="1"/>
<rect x="53" y="507" width="276" height="1" fill="#E3E3E3" />
<text x="128.6" y="521" font-size="11" fill="#262626" textLength="16.0" lengthAdjust="spacingAndGlyphs" >A...</text>
<text x="149.6" y="521" font-size="11" fill="#262626" textLength="82.0" lengthAdjust="spacingAndGlyphs" >Fwd: IPA 2017 ...</text>
<text x="236.3" y="521" font-size="11" fill="#262626" textLength="14.5" lengthAdjust="spacingAndGlyphs" >u...</text>
<text x="258.8" y="521" font-size="11" fill="#262626" >3</text>
<rect x="269.5" y="511.5" width="8" height="12" fill="#fff" stroke="#D0D0D0" stroke-width="1"/>
<rect x="292" y="510" width="2" height="14" fill="#555"/><path d="M295.5 510.5 L303.5 514.3 L295.5 518 Z" fill="none" stroke="#666" stroke-width="1"/>
<path d="M99.7 521.5 H93.5 V514.5 Q99.5 509 105.5 514.5 V517.4 M93.7 515 L97.2 517.4 H101.9 L105.5 514.5" stroke="#555" fill="none" stroke-width="1"/><path d="M108.1 521.9 h-5.5 M104.3 519.2 l-2.7 2.7 l2.7 2.7" stroke="#8A3FB5" fill="none" stroke-width="2"/>
<rect x="53" y="526" width="276" height="1" fill="#E3E3E3" />
<text x="128.6" y="540" font-size="11" fill="#262626" textLength="16.0" lengthAdjust="spacingAndGlyphs" >C...</text>
<text x="149.6" y="540" font-size="11" fill="#262626" textLength="77.0" lengthAdjust="spacingAndGlyphs" >Your passwor...</text>
<text x="236.3" y="540" font-size="11" fill="#262626" textLength="14.5" lengthAdjust="spacingAndGlyphs" >u...</text>
<text x="258.8" y="540" font-size="11" fill="#262626" >2</text>
<rect x="269.5" y="530.5" width="8" height="12" fill="#fff" stroke="#D0D0D0" stroke-width="1"/>
<rect x="292" y="529" width="2" height="14" fill="#555"/><path d="M295.5 529.5 L303.5 533.3 L295.5 537 Z" fill="none" stroke="#666" stroke-width="1"/>
<rect x="53" y="545" width="276" height="1" fill="#E3E3E3" />
<text x="128.6" y="559" font-size="11" fill="#262626" textLength="18.4" lengthAdjust="spacingAndGlyphs" >M...</text>
<text x="150.5" y="559" font-size="11" fill="#262626" textLength="41.1" lengthAdjust="spacingAndGlyphs" >emailovi</text>
<text x="236.3" y="559" font-size="11" fill="#262626" textLength="14.5" lengthAdjust="spacingAndGlyphs" >u...</text>
<text x="258.8" y="559" font-size="11" fill="#262626" >9</text>
<rect x="269.5" y="549.5" width="8" height="12" fill="#fff" stroke="#D0D0D0" stroke-width="1"/>
<rect x="292" y="548" width="2" height="14" fill="#555"/><path d="M295.5 548.5 L303.5 552.3 L295.5 556 Z" fill="none" stroke="#666" stroke-width="1"/>
<rect x="53" y="564" width="276" height="25" fill="#F0F0F0" />
<rect x="53" y="564" width="276" height="1" fill="#E6E6E6" />
<path d="M63 578 L69 572 V578 Z" fill="#444"/>
<text x="80.6" y="581" font-size="11" fill="#444" font-weight="bold" textLength="70.7" lengthAdjust="spacingAndGlyphs" >Date: Monday</text>
<rect x="53" y="589" width="276" height="1" fill="#E3E3E3" />
<text x="128.6" y="603" font-size="11" fill="#262626" textLength="16.0" lengthAdjust="spacingAndGlyphs" >D...</text>
<text x="149.6" y="603" font-size="11" fill="#262626" textLength="79.8" lengthAdjust="spacingAndGlyphs" >Sirius &amp; Mana...</text>
<text x="236.3" y="603" font-size="11" fill="#262626" textLength="14.5" lengthAdjust="spacingAndGlyphs" >p...</text>
<text x="258.8" y="603" font-size="11" fill="#262626" >1</text>
<rect x="269.5" y="593.5" width="8" height="12" fill="#fff" stroke="#D0D0D0" stroke-width="1"/>
<rect x="292" y="592" width="2" height="14" fill="#555"/><path d="M295.5 592.5 L303.5 596.3 L295.5 600 Z" fill="none" stroke="#666" stroke-width="1"/>
<path d="M115.5 595 v6.5 q0 3 2.5 3 q2.5 0 2.5-3 v-7.5 q0-2-1.7-2 q-1.7 0-1.7 2 v7" stroke="#555" fill="none" stroke-width="1"/>
<rect x="53" y="608" width="276" height="1" fill="#E3E3E3" />
<text x="128.6" y="622" font-size="11" fill="#262626" textLength="16.0" lengthAdjust="spacingAndGlyphs" >C...</text>
<text x="149.6" y="622" font-size="11" fill="#262626" textLength="81.4" lengthAdjust="spacingAndGlyphs" >Republicki zav...</text>
<text x="236.3" y="622" font-size="11" fill="#262626" textLength="14.5" lengthAdjust="spacingAndGlyphs" >p...</text>
<text x="258.8" y="622" font-size="11" fill="#262626" >2</text>
<rect x="269.5" y="612.5" width="8" height="12" fill="#fff" stroke="#D0D0D0" stroke-width="1"/>
<rect x="292" y="611" width="2" height="14" fill="#555"/><path d="M295.5 611.5 L303.5 615.3 L295.5 619 Z" fill="none" stroke="#666" stroke-width="1"/>
<rect x="53" y="627" width="276" height="1" fill="#E3E3E3" />
<text x="128.6" y="641" font-size="11" fill="#262626" textLength="16.0" lengthAdjust="spacingAndGlyphs" >D...</text>
<text x="149.6" y="641" font-size="11" fill="#262626" textLength="77.0" lengthAdjust="spacingAndGlyphs" >dns teleklik p...</text>
<text x="236.3" y="641" font-size="11" fill="#262626" textLength="14.5" lengthAdjust="spacingAndGlyphs" >p...</text>
<text x="258.8" y="641" font-size="11" fill="#262626" >5</text>
<rect x="269.5" y="631.5" width="8" height="12" fill="#fff" stroke="#D0D0D0" stroke-width="1"/>
<rect x="292" y="630" width="2" height="14" fill="#555"/><path d="M295.5 630.5 L303.5 634.3 L295.5 638 Z" fill="none" stroke="#666" stroke-width="1"/>
<rect x="53" y="646" width="276" height="1" fill="#E3E3E3" />
<text x="128.6" y="660" font-size="11" fill="#262626" textLength="16.0" lengthAdjust="spacingAndGlyphs" >D...</text>
<text x="150.5" y="660" font-size="11" fill="#262626" textLength="64.3" lengthAdjust="spacingAndGlyphs" >Cisco Webex</text>
<text x="236.3" y="660" font-size="11" fill="#262626" textLength="14.5" lengthAdjust="spacingAndGlyphs" >p...</text>
<text x="258.8" y="660" font-size="11" fill="#262626" >2</text>
<rect x="269.5" y="650.5" width="8" height="12" fill="#fff" stroke="#D0D0D0" stroke-width="1"/>
<rect x="292" y="649" width="2" height="14" fill="#555"/><path d="M295.5 649.5 L303.5 653.3 L295.5 657 Z" fill="none" stroke="#666" stroke-width="1"/>
<rect x="53" y="665" width="276" height="1" fill="#E3E3E3" />
<text x="128.6" y="679" font-size="11" fill="#262626" textLength="17.9" lengthAdjust="spacingAndGlyphs" >Bi...</text>
<text x="149.6" y="679" font-size="11" fill="#262626" textLength="49.6" lengthAdjust="spacingAndGlyphs" >Željeznice</text>
<text x="236.3" y="679" font-size="11" fill="#262626" textLength="14.5" lengthAdjust="spacingAndGlyphs" >p...</text>
<text x="258.8" y="679" font-size="11" fill="#262626" >8</text>
<rect x="269.5" y="669.5" width="8" height="12" fill="#fff" stroke="#D0D0D0" stroke-width="1"/>
<rect x="292" y="668" width="2" height="14" fill="#555"/><path d="M295.5 668.5 L303.5 672.3 L295.5 676 Z" fill="none" stroke="#666" stroke-width="1"/>
<rect x="53" y="684" width="276" height="1" fill="#E3E3E3" />
<text x="128.6" y="698" font-size="11" fill="#262626" textLength="16.0" lengthAdjust="spacingAndGlyphs" >A...</text>
<text x="149.6" y="698" font-size="11" fill="#262626" textLength="81.2" lengthAdjust="spacingAndGlyphs" >Prijedlog datu...</text>
<text x="236.3" y="698" font-size="11" fill="#262626" textLength="14.5" lengthAdjust="spacingAndGlyphs" >p...</text>
<text x="258.8" y="698" font-size="11" fill="#262626" >9</text>
<rect x="269.5" y="688.5" width="8" height="12" fill="#fff" stroke="#D0D0D0" stroke-width="1"/>
<rect x="292" y="687" width="2" height="14" fill="#555"/><path d="M295.5 687.5 L303.5 691.3 L295.5 695 Z" fill="none" stroke="#666" stroke-width="1"/>
<rect x="53" y="703" width="276" height="25" fill="#F0F0F0" />
<rect x="53" y="703" width="276" height="1" fill="#E6E6E6" />
<path d="M63 717 L69 711 V717 Z" fill="#444"/>
<text x="80.6" y="720" font-size="11" fill="#444" font-weight="bold" textLength="83.1" lengthAdjust="spacingAndGlyphs" >Date: Last Week</text>
<rect x="53" y="728" width="276" height="1" fill="#E3E3E3" />
<text x="128.6" y="742" font-size="11" fill="#262626" textLength="16.0" lengthAdjust="spacingAndGlyphs" >N...</text>
<text x="150.5" y="742" font-size="11" fill="#262626" textLength="20.7" lengthAdjust="spacingAndGlyphs" >stan</text>
<text x="236.3" y="742" font-size="11" fill="#262626" textLength="14.5" lengthAdjust="spacingAndGlyphs" >p...</text>
<text x="258.8" y="742" font-size="11" fill="#262626" >7</text>
<rect x="269.5" y="732.5" width="8" height="12" fill="#fff" stroke="#D0D0D0" stroke-width="1"/>
<rect x="292" y="731" width="2" height="14" fill="#555"/><path d="M295.5 731.5 L303.5 735.3 L295.5 739 Z" fill="none" stroke="#666" stroke-width="1"/>
<rect x="53" y="747" width="276" height="1" fill="#E3E3E3" />
<text x="128.6" y="761" font-size="11" fill="#262626" textLength="16.0" lengthAdjust="spacingAndGlyphs" >N...</text>
<text x="150.5" y="761" font-size="11" fill="#262626" textLength="36.4" lengthAdjust="spacingAndGlyphs" >stanovi</text>
<text x="236.3" y="761" font-size="11" fill="#262626" textLength="14.5" lengthAdjust="spacingAndGlyphs" >p...</text>
<text x="258.8" y="761" font-size="11" fill="#262626" >8</text>
<rect x="269.5" y="751.5" width="8" height="12" fill="#fff" stroke="#D0D0D0" stroke-width="1"/>
<rect x="292" y="750" width="2" height="14" fill="#555"/><path d="M295.5 750.5 L303.5 754.3 L295.5 758 Z" fill="none" stroke="#666" stroke-width="1"/>
<rect x="53" y="766" width="276" height="1" fill="#E3E3E3" />
<text x="128.6" y="780" font-size="11" fill="#262626" textLength="16.0" lengthAdjust="spacingAndGlyphs" >N...</text>
<text x="150.5" y="780" font-size="11" fill="#262626" textLength="20.7" lengthAdjust="spacingAndGlyphs" >stan</text>
<text x="236.3" y="780" font-size="11" fill="#262626" textLength="14.5" lengthAdjust="spacingAndGlyphs" >p...</text>
<text x="258.8" y="780" font-size="11" fill="#262626" >9</text>
<rect x="269.5" y="770.5" width="8" height="12" fill="#fff" stroke="#D0D0D0" stroke-width="1"/>
<rect x="292" y="769" width="2" height="14" fill="#555"/><path d="M295.5 769.5 L303.5 773.3 L295.5 777 Z" fill="none" stroke="#666" stroke-width="1"/>
<path d="M99.7 780.5 H93.5 V773.5 Q99.5 768 105.5 773.5 V776.4 M93.7 774 L97.2 776.4 H101.9 L105.5 773.5" stroke="#555" fill="none" stroke-width="1"/><path d="M108.1 780.9 h-5.5 M104.3 778.2 l-2.7 2.7 l2.7 2.7" stroke="#8A3FB5" fill="none" stroke-width="2"/>
<rect x="53" y="785" width="276" height="1" fill="#E3E3E3" />
<text x="128.6" y="799" font-size="11" fill="#262626" textLength="16.0" lengthAdjust="spacingAndGlyphs" >A...</text>
<text x="149.6" y="799" font-size="11" fill="#262626" textLength="79.8" lengthAdjust="spacingAndGlyphs" >Re: IPA 2017 - ...</text>
<text x="236.3" y="799" font-size="11" fill="#262626" textLength="14.5" lengthAdjust="spacingAndGlyphs" >p...</text>
<text x="258.8" y="799" font-size="11" fill="#262626" >4</text>
<rect x="269.5" y="789.5" width="8" height="12" fill="#fff" stroke="#D0D0D0" stroke-width="1"/>
<rect x="292" y="788" width="2" height="14" fill="#555"/><path d="M295.5 788.5 L303.5 792.3 L295.5 796 Z" fill="none" stroke="#666" stroke-width="1"/>
<rect x="53" y="804" width="276" height="1" fill="#E3E3E3" />
<text x="128.6" y="818" font-size="11" fill="#262626" textLength="16.0" lengthAdjust="spacingAndGlyphs" >A...</text>
<text x="149.6" y="818" font-size="11" fill="#262626" textLength="79.8" lengthAdjust="spacingAndGlyphs" >Re: IPA 2017 - ...</text>
<text x="236.3" y="818" font-size="11" fill="#262626" textLength="14.5" lengthAdjust="spacingAndGlyphs" >p...</text>
<text x="258.8" y="818" font-size="11" fill="#262626" >4</text>
<rect x="269.5" y="808.5" width="8" height="12" fill="#fff" stroke="#D0D0D0" stroke-width="1"/>
<rect x="292" y="807" width="2" height="14" fill="#555"/><path d="M295.5 807.5 L303.5 811.3 L295.5 815 Z" fill="none" stroke="#666" stroke-width="1"/>
<rect x="53" y="823" width="276" height="1" fill="#E3E3E3" />
<text x="128.6" y="837" font-size="11" fill="#262626" textLength="16.0" lengthAdjust="spacingAndGlyphs" >A...</text>
<text x="149.6" y="837" font-size="11" fill="#262626" textLength="79.8" lengthAdjust="spacingAndGlyphs" >RE: IPA 2017 - ...</text>
<text x="236.3" y="837" font-size="11" fill="#262626" textLength="14.5" lengthAdjust="spacingAndGlyphs" >p...</text>
<text x="258.8" y="837" font-size="11" fill="#262626" >4</text>
<rect x="269.5" y="827.5" width="8" height="12" fill="#fff" stroke="#D0D0D0" stroke-width="1"/>
<rect x="292" y="826" width="2" height="14" fill="#555"/><path d="M295.5 826.5 L303.5 830.3 L295.5 834 Z" fill="none" stroke="#666" stroke-width="1"/>
<rect x="44" y="837" width="314" height="1" fill="#fff" />
<path d="M375.5 182.5 V175.5 L381.5 171.5 L387.5 175.5 V179 M375.5 182.5 H382 M375.5 176 L381.5 179.5 L387.5 176" stroke="#666" fill="none" stroke-width="1"/>
<path d="M390.5 183 h-7 M386 180.5 l-2.5 2.5 l2.5 2.5" stroke="#8A3FB5" fill="none" stroke-width="1.7"/>
<text x="392.7" y="183" font-size="12" fill="#444" textLength="27.6" lengthAdjust="spacingAndGlyphs" >Reply</text>
<path d="M431.5 181.5 V175.5 L436.5 171.5" stroke="#666" fill="none" stroke-width="1"/>
<path d="M433.5 183.5 V176.5 L439.5 172.5 L445.5 176.5 V180 M433.5 183.5 H440 M433.5 177 L439.5 180.5 L445.5 177" stroke="#666" fill="none" stroke-width="1"/>
<path d="M448.5 184 h-7 M444 181.5 l-2.5 2.5 l2.5 2.5" stroke="#8A3FB5" fill="none" stroke-width="1.7"/>
<text x="449.4" y="183" font-size="12" fill="#444" textLength="44.6" lengthAdjust="spacingAndGlyphs" >Reply All</text>
<path d="M506.5 182.5 V175.5 L512.5 171.5 L518.5 175.5 V179 M506.5 182.5 H513 M506.5 176 L512.5 179.5 L518.5 176" stroke="#666" fill="none" stroke-width="1"/>
<path d="M514 183 h7 M518.5 180.5 l2.5 2.5 l-2.5 2.5" stroke="#3A78C4" fill="none" stroke-width="1.7"/>
<text x="522.8" y="183" font-size="12" fill="#444" textLength="42.8" lengthAdjust="spacingAndGlyphs" >Forward</text>
<rect x="370" y="192" width="72" height="72" fill="#ADADAD" />
<ellipse cx="405" cy="217.3" rx="13.9" ry="15.8" fill="#fff"/><path d="M378 264 L380 241 Q382 233.5 392 232.5 Q397 232.5 405 238.2 Q413 232.5 418 232.5 Q429 233.5 431.5 241 L434 264 Z" fill="#fff"/>
<text x="463.8" y="203" font-size="11" fill="#444" textLength="94.2" lengthAdjust="spacingAndGlyphs" >čet 21.5.2020 09.05</text>
<text x="463.8" y="233" font-size="20" fill="#7A7A7A" textLength="379.9" lengthAdjust="spacingAndGlyphs" >Statistika - WebApp &lt;webapp@rzs.rs.ba&gt;</text>
<text x="463.8" y="259" font-size="14" fill="#3C3C3C" font-weight="bold" textLength="104.2" lengthAdjust="spacingAndGlyphs" >Потврди налог</text>
<text x="369.8" y="282" font-size="11" fill="#555" textLength="12.2" lengthAdjust="spacingAndGlyphs" >To</text>
<text x="396.6" y="281" font-size="11" fill="#555" textLength="107.2" lengthAdjust="spacingAndGlyphs" >Registrovani Korisnik</text>
<path d="M1265.5 284.5 L1270.5 279.5 L1275.5 284.5" stroke="#666" stroke-width="1.6" fill="none"/>
<rect x="370" y="293" width="909" height="1" fill="#E1E1E1" />
<text x="380.3" y="334.8" font-size="13" fill="#000" font-weight="bold" textLength="848.3" lengthAdjust="spacingAndGlyphs" >Ова порука аутоматски је генерисана приликом регистрације налога новог корисника у апликацији webapp.rzs.rs.ba. Потврди налог</text>
<text x="380.3" y="353.5" font-size="13" fill="#000" font-weight="bold" textLength="48.3" lengthAdjust="spacingAndGlyphs" >кликом</text>
<text x="432" y="353.5" font-size="13" fill="#0000FF" font-weight="bold" textLength="35.0" lengthAdjust="spacingAndGlyphs" >овдје</text>
<rect x="432" y="356" width="35" height="1" fill="#0000FF" />
<rect x="1" y="838" width="1285" height="1" fill="#CFCFCF" />
<rect x="1" y="839" width="1285" height="21" fill="#F3F3F3" />
<text x="9.2" y="853" font-size="12" fill="#444" textLength="50.4" lengthAdjust="spacingAndGlyphs" >Items: 539</text>
<text x="76" y="853" font-size="12" fill="#444" textLength="49.0" lengthAdjust="spacingAndGlyphs" >Unread: 1</text>
<rect x="1015" y="839" width="40" height="21" fill="#C8C8C8" />
<g stroke="#666" fill="none" stroke-width="1"><rect x="1028.5" y="842.5" width="13" height="11"/><line x1="1032.5" y1="842.5" x2="1032.5" y2="853.5"/></g>
<g stroke="#666" fill="none" stroke-width="1"><path d="M1068.5 843.5 v10 h5 l0.5 1 l0.5-1 h5 v-10 h-5 l-0.5 1 l-0.5-1 z M1074 844 v9"/><path d="M1070 846 h3 M1070 848 h3 M1070 850 h3 M1075 846 h3 M1075 848 h3 M1075 850 h3"/></g>
<rect x="1101" y="848" width="7" height="1" fill="#444" />
<rect x="1114" y="848" width="99" height="1" fill="#A0A0A0" />
<rect x="1162" y="843" width="5" height="11" fill="#666" />
<rect x="1219" y="848" width="8" height="1" fill="#444" />
<rect x="1222.5" y="844.5" width="1" height="8" fill="#444" />
<text x="1240.7" y="853" font-size="12" fill="#444" textLength="25.3" lengthAdjust="spacingAndGlyphs" >100%</text>
<rect x="0" y="0" width="1" height="861" fill="#106EBE" />
<rect x="1286" y="0" width="1" height="861" fill="#106EBE" />
<rect x="0" y="860" width="1287" height="1" fill="#106EBE" />
<rect x="0" y="860" width="1287" height="1" fill="#106EBE" />
<rect x="15.5" y="78.5" width="28" height="17" fill="#fff" stroke="#7A7A7A"/>
<rect x="37" y="81" width="4" height="5" fill="#3D7AC0" />
<rect x="22" y="88" width="12" height="1" fill="#A0A0A0" />
<rect x="22" y="90" width="12" height="1" fill="#A0A0A0" />
<rect x="58.5" y="73.5" width="21" height="13" fill="#fff" stroke="#7A7A7A"/>
<rect x="75" y="75" width="3" height="4" fill="#3D7AC0" />
<rect x="62" y="79" width="10" height="1" fill="#A0A0A0" />
<rect x="62" y="81" width="10" height="1" fill="#A0A0A0" />
<circle cx="64.3" cy="88.5" r="4.2" fill="#4A86C8"/>
<path d="M56.8 101.2 Q56.8 93.5 64.2 93.5 Q71.6 93.5 71.6 101.2 Z" stroke="none" fill="#4A86C8" stroke-width="1" />
<rect x="69.5" y="85.5" width="16" height="15" fill="#fff" stroke="#7A7A7A"/>
<rect x="69" y="85" width="17" height="3" fill="#6D6D6D" />
<path d="M69.5 92.5 H85.5 M69.5 96.5 H85.5 M73.5 88 V100.5 M77.5 88 V100.5 M81.5 88 V100.5" stroke="#A8A8A8" fill="none" stroke-width="1" />
<rect x="73.5" y="89.5" width="4" height="4" fill="#fff" stroke="#E8692B" stroke-width="1.4"/>
<path d="M112.5 80.5 V74.5 L117.5 71.5 L123.5 74.5 M115.5 83.5 V76.5 H124.5 M117.5 85.5 V78.5 H127.5" stroke="#6D6D6D" fill="none" stroke-width="1" />
<path d="M120.5 80 L127.5 86.5 M127.5 80 L120.5 86.5" stroke="#E0563B" fill="none" stroke-width="1.6" />
<path d="M112.5 94.5 L120 101 M120 94.5 L112.5 101" stroke="#E0563B" fill="none" stroke-width="1.8" />
<rect x="117" y="102" width="11" height="8" fill="#E9C283" />
<path d="M117.5 102.5 L122.5 106 L127.5 102.5" stroke="#fff" fill="none" stroke-width="1" />
<rect x="121.5" y="98" width="5" height="1" fill="#E9C283" />
<rect x="121.5" y="100" width="5" height="1" fill="#E9C283" />
<rect x="113" y="103" width="1" height="5" fill="#E9C283" />
<rect x="115" y="103" width="1" height="5" fill="#E9C283" />
<circle cx="117.9" cy="120.3" r="3.6" fill="#6D6D6D"/>
<path d="M112.2 131 V126.5 Q112.2 123.5 117.9 123.5 Q121 123.5 121.5 124.5 L120 131 Z" stroke="none" fill="#6D6D6D" stroke-width="1" />
<circle cx="124.2" cy="127.8" r="3.6" fill="#F3F3F3" stroke="#E0563B" stroke-width="1.5"/>
<path d="M121.8 125.4 L126.6 130.2" stroke="#E0563B" fill="none" stroke-width="1.5" />
<path d="M201.5 77 C201.5 73.3 205 73.3 207.5 75 C214.5 80 222 87 229.5 100 C221 92.5 213 87.5 204 80.5 C202.5 79.3 201.5 78.3 201.5 77 Z" stroke="none" fill="#7A7A7A" stroke-width="1" />
<path d="M201 97.5 C203 92 209 86 214.5 82.5 C219 79.5 224 77.5 229.5 76.3 C222 80 216.5 85 206.5 97.5 C204 100.5 201 100.5 201 97.5 Z" stroke="none" fill="#7A7A7A" stroke-width="1" />
<rect x="243" y="75" width="30" height="6.5" fill="#6FA58E" />
<rect x="244.5" y="81.5" width="27" height="17" fill="#fff" stroke="#7A7A7A"/>
<rect x="252.5" y="89.5" width="11" height="4" fill="none" stroke="#7A7A7A"/>
<path d="M305.5 97.5 V82.5 L315.0 73.3 Q318.0 72 321.0 73.3 L330.5 82.5 V97.5 Z" stroke="none" fill="#fff" stroke-width="1" />
<path d="M318 97.5 H305.5 V82.5 L315.0 73.3 Q318.0 72 321.0 73.3 L330.5 82.5 V93.7" stroke="#7A7A7A" fill="none" stroke-width="1" />
<path d="M305.5 82.5 L312 88.5 H324 L330.5 82.5" stroke="#7A7A7A" fill="none" stroke-width="1" />
<path d="M318.4 96.4 L324.5 90.1 H328.29999999999995 L323.4 95 H334 V97.8 H323.4 L328.29999999999995 102.8 H324.5 Z" stroke="none" fill="#9560BA" stroke-width="1" />
<path d="M344.5 95.7 V80.5 L355.3 71.4" stroke="#7A7A7A" fill="none" stroke-width="1.1" />
<path d="M347.5 97.5 V82.5 L357.0 73.3 Q360.0 72 363.0 73.3 L372.5 82.5 V97.5 Z" stroke="none" fill="#fff" stroke-width="1" />
<path d="M360 97.5 H347.5 V82.5 L357.0 73.3 Q360.0 72 363.0 73.3 L372.5 82.5 V93.7" stroke="#7A7A7A" fill="none" stroke-width="1" />
<path d="M347.5 82.5 L354 88.5 H366 L372.5 82.5" stroke="#7A7A7A" fill="none" stroke-width="1" />
<path d="M360.2 96.4 L366.3 90.1 H370.09999999999997 L365.2 95 H375.7 V97.8 H365.2 L370.09999999999997 102.8 H366.3 Z" stroke="none" fill="#9560BA" stroke-width="1" />
<path d="M392.5 97.5 V82.5 L402.0 73.3 Q405.0 72 408.0 73.3 L417.5 82.5 V97.5 Z" stroke="none" fill="#fff" stroke-width="1" />
<path d="M404.9 97.5 H392.5 V82.5 L402.0 73.3 Q405.0 72 408.0 73.3 L417.5 82.5 V93.7" stroke="#7A7A7A" fill="none" stroke-width="1" />
<path d="M392.5 82.5 L399 88.5 H411 L417.5 82.5" stroke="#7A7A7A" fill="none" stroke-width="1" />
<path d="M420.9 96.4 L414.79999999999995 90.1 H411.0 L415.9 95 H404.9 V97.8 H415.9 L411.0 102.8 H414.79999999999995 Z" stroke="none" fill="#4A7FC0" stroke-width="1" />
<rect x="433.5" y="82.5" width="12" height="10" fill="#fff" stroke="#7A7A7A" stroke-dasharray="1.2 0.8"/>
<rect x="433" y="81" width="13" height="2.5" fill="#6D6D6D" />
<rect x="436.5" y="86.5" width="3" height="3" fill="none" stroke="#E8692B" stroke-width="1.3"/>
<path d="M448 92 H442.8" stroke="#8E4DB8" fill="none" stroke-width="1.8" />
<path d="M444.3 89 L441.6 92 L444.3 95" stroke="#8E4DB8" fill="none" stroke-width="1.8" stroke-linejoin="miter"/>
<rect x="432.5" y="111.5" width="12" height="10" fill="#fff" stroke="#7A7A7A" stroke-dasharray="1.2 0.8"/>
<rect x="432" y="110" width="13" height="2.5" fill="#6D6D6D" />
<rect x="435.5" y="115.5" width="3" height="3" fill="none" stroke="#E8692B" stroke-width="1.3"/>
<rect x="440.5" y="113.5" width="7" height="12" rx="1" fill="#fff" stroke="#6D6D6D"/>
<rect x="442" y="115" width="4" height="7" fill="#3D7AC0" />
<path d="M483 86 V76 H489 L491 73 H498 V86 Z" stroke="none" fill="#E9C283" stroke-width="1" />
<rect x="492" y="74" width="5" height="1" fill="#fff" />
<path d="M484 72.5 Q486 75 485.5 78.5 M483.2 76.5 L485.5 79 L487.5 76.5" stroke="#3D7AC0" fill="none" stroke-width="1.3" />
<rect x="483.5" y="95.5" width="13" height="9" fill="#fff" stroke="#6D6D6D"/>
<rect x="493" y="97" width="2" height="2" fill="#3D7AC0" />
<rect x="485.5" y="99" width="6" height="1" fill="#999" />
<rect x="485.5" y="101" width="5" height="1" fill="#999" />
<path d="M489.7 124.5 H483.5 V117.3 L488.0 113.5 Q489.5 112.9 491.0 113.5 L495.5 117.3 V121 M483.5 117.3 L486.8 120.2 H492.2 L495.5 117.3" stroke="#6D6D6D" fill="none" stroke-width="1" />
<path d="M490.8 124.6 L494.0 121.39999999999999 H496.0 L493.7 123.6 H498 V125.6 H493.7 L496.0 127.8 H494.0 Z" stroke="none" fill="#9560BA" stroke-width="1" />
<path d="M609.7 84.5 H603.5 V77.3 L608.0 73.5 Q609.5 72.9 611.0 73.5 L615.5 77.3 V81 M603.5 77.3 L606.8 80.2 H612.2 L615.5 77.3" stroke="#6D6D6D" fill="none" stroke-width="1" />
<path d="M618 85 L614.8 81.8 H612.8 L615.1 84 H611 V86 H615.1 L612.8 88.2 H614.8 Z" stroke="none" fill="#4A7FC0" stroke-width="1" />
<path d="M603.5 100 L608 104.5 L616 95" stroke="#4E9C84" fill="none" stroke-width="2.6" />
<path d="M605.3 111.8 V119.4 M601.5 115.6 H609.1 M602.6 112.9 L608 118.3 M608 112.9 L602.6 118.3" stroke="#F0A030" fill="none" stroke-width="0.9" />
<circle cx="605.3" cy="115.6" r="1.8" fill="#fff" stroke="#F0A030" stroke-width="0.9"/>
<path d="M610.5 116 L606.8 121.8 H609.6 L607.3 126.3 L613.8 119.6 H610.9 L613.5 116 Z" stroke="none" fill="#666" stroke-width="1" />
<path d="M760 85 V75 H766 L768 72.5 H776 V85 Z" stroke="none" fill="#E9C283" stroke-width="1" />
<rect x="769" y="73.5" width="6" height="1" fill="#fff" />
<path d="M761.5 71 Q763.5 74 763 77.5 M760.7 75.5 L763 78 L765 75.5" stroke="#3D7AC0" fill="none" stroke-width="1.3" />
<path d="M760 104 V96.5 H765 L767 93.8 H776 V104 Z" stroke="none" fill="#E9C283" stroke-width="1" />
<rect x="768" y="95" width="6" height="1" fill="#fff" />
<rect x="766.5" y="101.5" width="9" height="8" fill="#fff" stroke="#6D6D6D"/>
<rect x="772" y="103" width="2" height="2" fill="#3D7AC0" />
<rect x="768" y="106" width="4" height="1" fill="#999" />
<rect x="761" y="103" width="3" height="1" fill="#6D6D6D" />
<rect x="763" y="106" width="2" height="1" fill="#6D6D6D" />
<rect x="761" y="106" width="1" height="1" fill="#6D6D6D" />
<rect x="763" y="117" width="13" height="15.5" fill="#CA64EA" />
<rect x="765" y="117" width="11" height="15.5" fill="#9D3BBF" />
<rect x="760" y="119.5" width="11" height="11" fill="#7719AA" />
<text x="762" y="129" font-size="9.5" font-weight="bold" fill="#fff">N</text>
<path d="M854.2 84.8 V76.98 L860.45 73.3 L866.7 76.98 V84.8 Z" stroke="#6D6D6D" fill="#fff" stroke-width="1" />
<path d="M854.2 76.98 L860.45 80.2 L866.7 76.98" stroke="#6D6D6D" fill="none" stroke-width="1" />
<rect x="854" y="94" width="4" height="7.5" fill="#4A7EBB" />
<rect x="859" y="94" width="4" height="7.5" fill="#E46C0A" />
<rect x="864" y="94" width="4" height="7.5" fill="#E8C07E" />
<rect x="854" y="102" width="4" height="7.5" fill="#D9533D" />
<rect x="859" y="102" width="4" height="7.5" fill="#6FA58E" />
<rect x="864" y="102" width="4" height="7.5" fill="#8C8C8C" />
<rect x="855.5" y="118" width="2" height="14" fill="#6D6D6D" />
<path d="M858 117.5 L867.8 122 L858 127 Z" stroke="none" fill="#D9533D" stroke-width="1" />
<rect x="970.5" y="94.5" width="7" height="12" fill="#fff" stroke="#4A7EBB"/>
<rect x="977.5" y="94.5" width="7" height="12" fill="#fff" stroke="#7A7A7A"/>
<path d="M972 97.5 H976 M972 100 H976 M972 102.5 H976 M979 97.5 H983 M979 100 H983 M979 102.5 H983" stroke="#999" fill="none" stroke-width="1" />
<rect x="985" y="95" width="1.5" height="3" fill="#D9533D" />
<rect x="985" y="99" width="1.5" height="3" fill="#4A7EBB" />
<rect x="985" y="103" width="1.5" height="3" fill="#6FA58E" />
<path d="M970 117 H985 L979.5 124 V131 H975.5 V124 Z" stroke="none" fill="#6D6D6D" stroke-width="1" />
<text x="1090.5" y="101" font-size="33" font-weight="bold" fill="#666" textLength="23.5" lengthAdjust="spacingAndGlyphs">A</text>
<path d="M1111 77 Q1113.5 80 1111 83.5 M1114 74.5 Q1118 80 1114 86 M1117 73 Q1122 80 1117 89" stroke="#555" fill="none" stroke-width="1.2" />
<rect x="1166.5" y="73.5" width="21" height="13" fill="#fff" stroke="#7A7A7A"/>
<rect x="1183" y="75" width="3" height="4" fill="#3D7AC0" />
<rect x="1170" y="80" width="10" height="1" fill="#A0A0A0" />
<rect x="1170" y="82" width="8" height="1" fill="#A0A0A0" />
<rect x="1189" y="74" width="5" height="1" fill="#7A7A7A" />
<rect x="1189" y="77" width="4" height="1" fill="#7A7A7A" />
<rect x="1189" y="80" width="3" height="1" fill="#7A7A7A" />
<rect x="1172.5" y="86.5" width="21" height="13" fill="#fff" stroke="#7A7A7A"/>
<rect x="1189" y="88" width="3" height="4" fill="#3D7AC0" />
<rect x="1176" y="93" width="10" height="1" fill="#A0A0A0" />
<rect x="1176" y="95" width="8" height="1" fill="#A0A0A0" />
<rect x="1167" y="89" width="5" height="1" fill="#7A7A7A" />
<rect x="1168" y="92" width="4" height="1" fill="#7A7A7A" />
<rect x="1169" y="95" width="3" height="1" fill="#7A7A7A" />
<rect x="13.5" y="641" width="17" height="14" fill="#106EBE"/>
<path d="M13.5 641.5 L22 649 L30.5 641.5" stroke="#fff" fill="none" stroke-width="1.5" />
<rect x="14.0" y="688.0" width="1.8" height="1.8" fill="#555" />
<rect x="16.6" y="688.0" width="1.8" height="1.8" fill="#555" />
<rect x="19.2" y="688.0" width="1.8" height="1.8" fill="#555" />
<rect x="21.8" y="688.0" width="1.8" height="1.8" fill="#555" />
<rect x="24.4" y="688.0" width="1.8" height="1.8" fill="#555" />
<rect x="27.0" y="688.0" width="1.8" height="1.8" fill="#555" />
<rect x="14.0" y="690.6" width="1.8" height="1.8" fill="#555" />
<rect x="16.6" y="690.6" width="1.8" height="1.8" fill="#555" />
<rect x="19.2" y="690.6" width="1.8" height="1.8" fill="#555" />
<rect x="21.8" y="690.6" width="1.8" height="1.8" fill="#555" />
<rect x="24.4" y="690.6" width="1.8" height="1.8" fill="#555" />
<rect x="27.0" y="690.6" width="1.8" height="1.8" fill="#555" />
<rect x="14.0" y="693.2" width="1.8" height="1.8" fill="#555" />
<rect x="16.6" y="693.2" width="1.8" height="1.8" fill="#555" />
<rect x="19.2" y="693.2" width="1.8" height="1.8" fill="#555" />
<rect x="21.8" y="693.2" width="1.8" height="1.8" fill="#555" />
<rect x="24.4" y="693.2" width="1.8" height="1.8" fill="#555" />
<rect x="27.0" y="693.2" width="1.8" height="1.8" fill="#555" />
<rect x="14.0" y="695.8" width="1.8" height="1.8" fill="#555" />
<rect x="16.6" y="695.8" width="1.8" height="1.8" fill="#555" />
<rect x="19.2" y="695.8" width="1.8" height="1.8" fill="#555" />
<rect x="21.8" y="695.8" width="1.8" height="1.8" fill="#555" />
<rect x="24.4" y="695.8" width="1.8" height="1.8" fill="#555" />
<rect x="27.0" y="695.8" width="1.8" height="1.8" fill="#555" />
<rect x="13.5" y="685" width="16" height="1.6" fill="#555" />
<circle cx="24.5" cy="729" r="2.8" fill="#555"/><path d="M20 739 q0-6 4.5-6 q4.5 0 4.5 6 z" fill="#555"/>
<circle cx="18" cy="730" r="2.8" fill="#555" stroke="#fff" stroke-width="0.8"/><path d="M13.5 740 q0-6 4.5-6 q4.5 0 4.5 6 z" fill="#555" stroke="#fff" stroke-width="0.8"/>
<rect x="15.5" y="769.5" width="12" height="13" fill="none" stroke="#555" stroke-width="1.4"/>
<rect x="18.5" y="767" width="6" height="3.5" fill="#555" />
<path d="M18 776 L20.5 779 L25 772" stroke="#555" fill="none" stroke-width="1.4" />
<circle cx="13" cy="817" r="2" fill="#555"/>
<circle cx="22" cy="817" r="2" fill="#555"/>
<circle cx="31" cy="817" r="2" fill="#555"/></svg></body></html>
